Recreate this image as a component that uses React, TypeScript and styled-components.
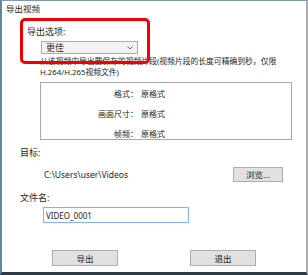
import React from 'react'
import styled, { createGlobalStyle } from 'styled-components'

const GlobalStyle = createGlobalStyle`
  html, body {
    margin: 0;
    padding: 0;
    background: #fff;
  }
`

const infoRows = [
  { label: '格式：', value: '原格式' },
  { label: '画面尺寸：', value: '原格式' },
  { label: '帧频：', value: '原格式' },
]

function ExportDialog() {
  return (
    <>
      <GlobalStyle />
      <Frame>
        <Title>导出视频</Title>

        <OptionLabel>导出选项:</OptionLabel>
        <Select>
          <span>更佳</span>
          <svg width="6" height="4" viewBox="0 0 6 4">
            <path d="M0.5 0.5 L3 3 L5.5 0.5" fill="none" stroke="#555" strokeWidth="0.9" />
          </svg>
        </Select>

        <Description>
          从该视频中导出要保存的视频片段(视频片段的长度可精确到秒，仅限
          <br />
          H.264/H.265视频文件)
        </Description>

        <InfoBox>
          {infoRows.map((r) => (
            <React.Fragment key={r.label}>
              <InfoLabel>{r.label}</InfoLabel>
              <InfoValue>{r.value}</InfoValue>
            </React.Fragment>
          ))}
        </InfoBox>

        <FieldLabel top={7}>目标:</FieldLabel>
        <PathRow>
          <PathText>C:\Users\user\Videos</PathText>
          <Button width={50}>浏览...</Button>
        </PathRow>

        <FieldLabel top={10}>文件名:</FieldLabel>
        <NameInput defaultValue="VIDEO_0001" />

        <ButtonRow>
          <Button width={66}>导出</Button>
          <Button width={66}>退出</Button>
        </ButtonRow>

        <Highlight />
      </Frame>
    </>
  )
}

const Frame = styled.div`
  position: relative;
  box-sizing: border-box;
  width: 308px;
  height: 275px;
  display: flex;
  flex-direction: column;
  align-items: flex-start;
  border-left: 2px solid #5e87a6;
  border-top: 1px solid #8298ae;
  border-right: 2px solid #a9a9a9;
  border-bottom: 3px solid #2f3b47;
  font-family: "Noto Sans", "Noto Sans CJK SC", sans-serif;
  font-size: 9px;
  color: #1e1e1e;
  overflow: hidden;
`

const Title = styled.div`
  margin: 2px 0 0 4px;
  line-height: 12px;
  font-size: 8.5px;
`

const OptionLabel = styled.div`
  margin: 11px 0 0 25px;
  line-height: 11px;
`

const Select = styled.div`
  box-sizing: border-box;
  margin: 4px 0 0 39px;
  width: 97px;
  height: 13px;
  display: flex;
  align-items: center;
  justify-content: space-between;
  padding: 0 4px;
  background: #f2f2f2;
  border: 1px solid #acacac;
  line-height: 11px;

  svg {
    display: block;
  }
`

const Description = styled.div`
  margin: 2px 0 0 38px;
  width: 262px;
  font-size: 7.8px;
  line-height: 11px;
  white-space: nowrap;
`

const InfoBox = styled.div`
  box-sizing: border-box;
  margin: 4px 0 0 38px;
  width: 252px;
  height: 58px;
  border: 1px solid #a8a8a8;
  display: grid;
  grid-template-columns: 97px 1fr;
  grid-auto-rows: 20px;
  column-gap: 3px;
  align-items: center;
  font-size: 8px;
`

const InfoLabel = styled.div`
  text-align: right;
  line-height: 11px;
`

const InfoValue = styled.div`
  line-height: 11px;
`

const FieldLabel = styled.div<{ top: number }>`
  margin: ${(p) => p.top}px 0 0 18px;
  line-height: 11px;
`

const PathRow = styled.div`
  margin: 9px 0 0 42px;
  width: 239px;
  height: 15px;
  display: flex;
  align-items: center;
  justify-content: space-between;
`

const PathText = styled.span`
  font-size: 8.5px;
`

const Button = styled.button<{ width: number }>`
  box-sizing: border-box;
  width: ${(p) => p.width}px;
  height: 15px;
  padding: 0;
  margin: 0;
  background: #e1e1e1;
  border: 1px solid #adadad;
  font-family: inherit;
  font-size: 8.5px;
  line-height: 13px;
  color: #1e1e1e;
`

const NameInput = styled.input`
  box-sizing: border-box;
  margin: 4px 0 0 41px;
  width: 146px;
  height: 16px;
  padding: 0 2px;
  border: 1px solid #7eb4ea;
  outline: none;
  font-family: inherit;
  font-size: 8px;
  color: #1e1e1e;
`

const ButtonRow = styled.div`
  margin: 27px 0 0 50px;
  display: flex;
  gap: 72px;

  button {
    height: 16px;
  }
`

const Highlight = styled.div`
  position: absolute;
  left: 18px;
  top: 17px;
  box-sizing: border-box;
  width: 130px;
  height: 46px;
  border: 3px solid #f00000;
  border-radius: 5px;
  pointer-events: none;
`

export default ExportDialog
